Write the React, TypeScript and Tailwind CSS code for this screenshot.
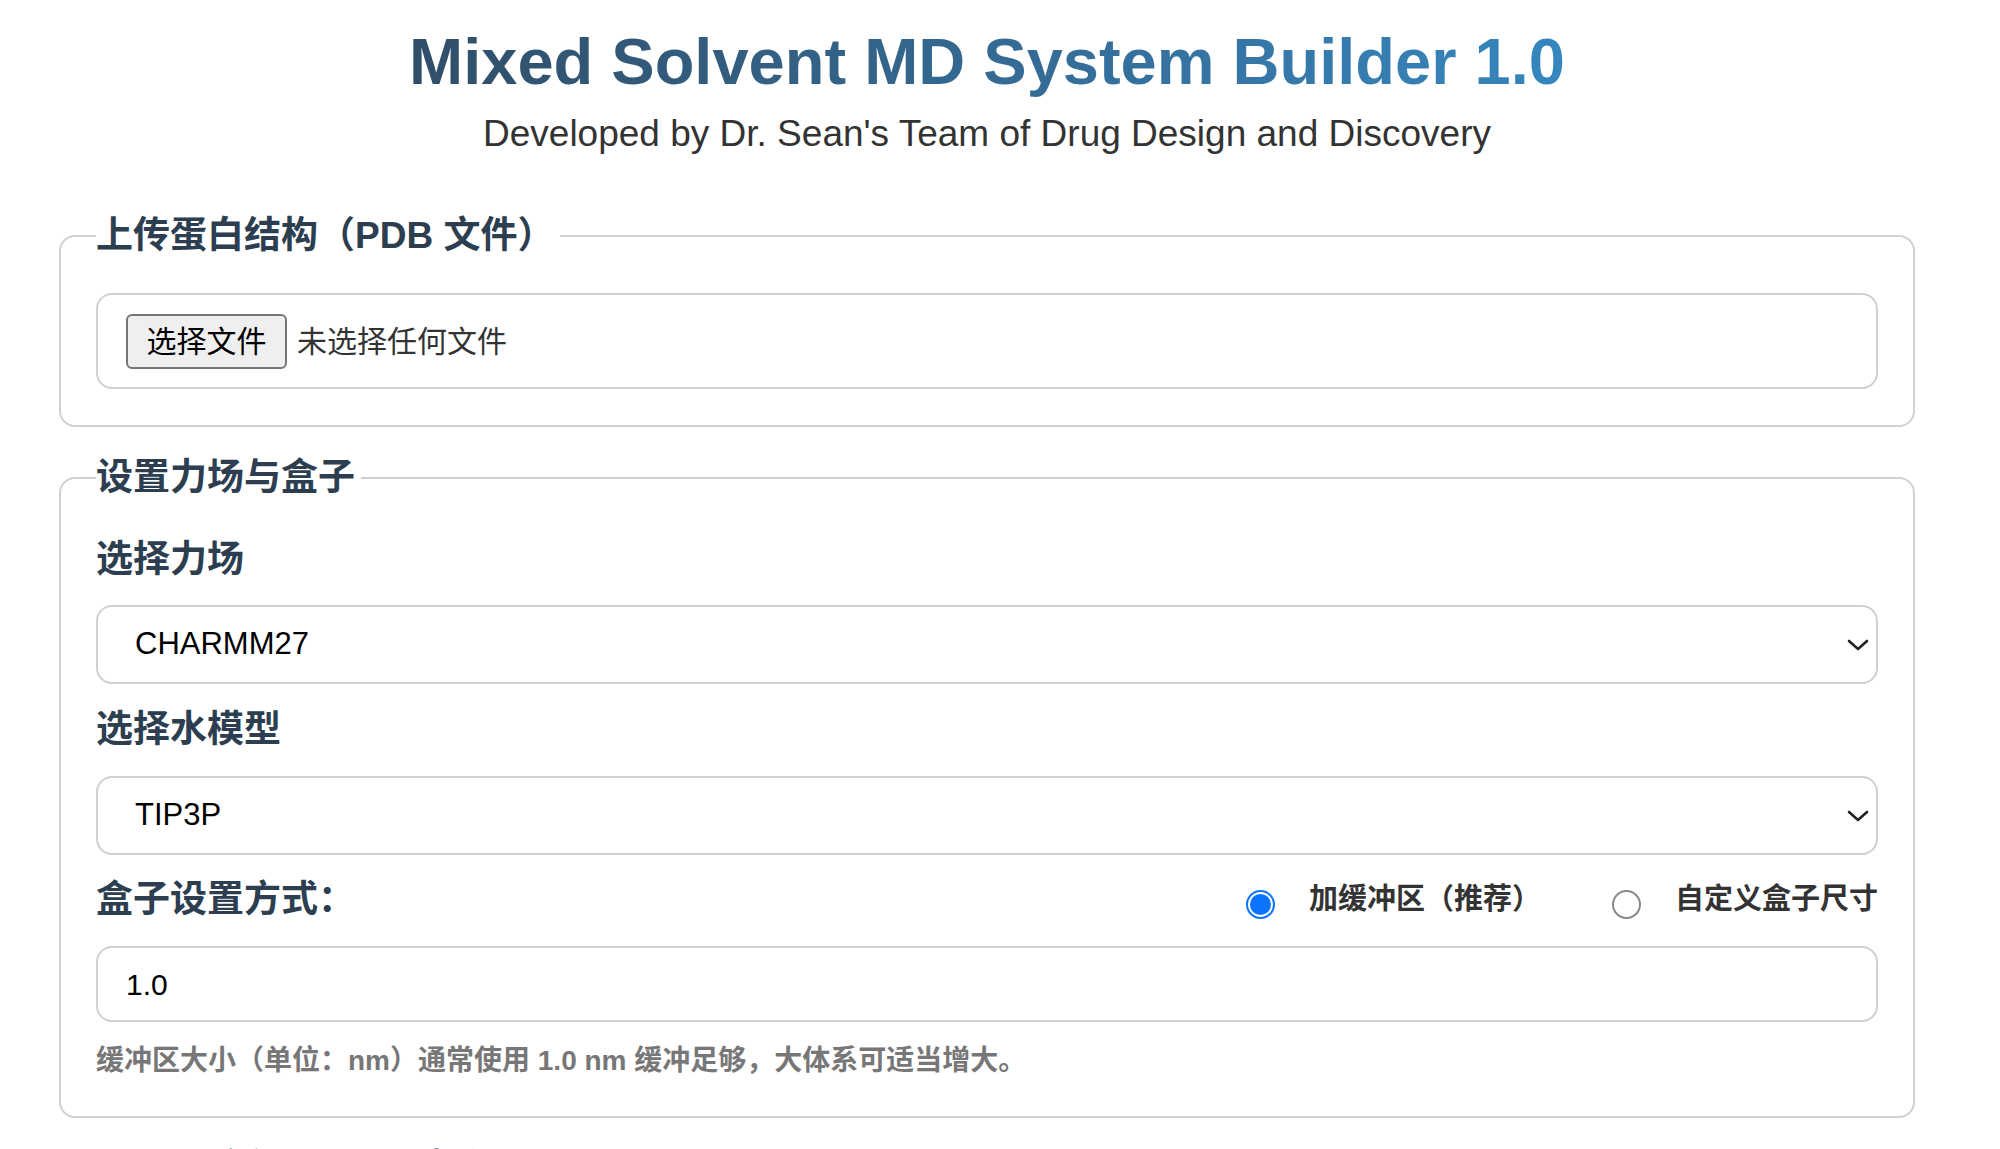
import React from 'react';

const Chevron: React.FC = () => (
  <svg width="22" height="14" viewBox="0 0 22 14" fill="none" className="shrink-0">
    <polyline points="2,3 11,11 20,3" stroke="#222" strokeWidth="2.6" strokeLinecap="round" strokeLinejoin="round" />
  </svg>
);

const FakeSelect: React.FC<{ value: string }> = ({ value }) => (
  <div className="flex h-[79px] items-center justify-between rounded-[16px] border-2 border-[#d0d0d0] bg-white pl-[37px] pr-[7px]">
    <span className="text-[31px] text-black">{value}</span>
    <Chevron />
  </div>
);

const Radio: React.FC<{ checked?: boolean; label: string }> = ({ checked, label }) => (
  <label className="flex items-center gap-[34px]">
    {checked ? (
      <span className="mt-[8px] flex h-[29px] w-[29px] items-center justify-center rounded-full border-2 border-[#0a74ff] bg-white">
        <span className="h-[21px] w-[21px] rounded-full bg-[#0a74ff]" />
      </span>
    ) : (
      <span className="mt-[8px] h-[29px] w-[29px] rounded-full border-2 border-[#8a8a8a] bg-white" />
    )}
    <span className="text-[29px] font-bold text-[#333]">{label}</span>
  </label>
);

export default function App() {
  return (
    <div className="min-h-screen bg-white pl-[59px] pr-[85px] pt-[24px] font-['Liberation_Sans','Noto_Sans_CJK_SC',sans-serif]">
      <h1 className="bg-linear-to-r from-[#2c3e50] to-[#3498db] bg-clip-text text-center text-[65px] font-bold leading-[76px] text-transparent">
        Mixed Solvent MD System Builder 1.0
      </h1>
      <p className="mt-[12px] text-center text-[37px] leading-[44px] text-[#333]">
        Developed by Dr. Sean's Team of Drug Design and Discovery
      </p>

      {/* upload */}
      <fieldset className="mt-[55px] rounded-[16px] border-2 border-[#d0d0d0] px-[35px] pt-[32px] pb-[36px]">
        <legend className="pr-[6px] text-[37px] font-bold leading-[50px] text-[#2c3e50]">上传蛋白结构（PDB 文件）</legend>
        <div className="flex h-[96px] items-center gap-[10px] rounded-[16px] border-2 border-[#d0d0d0] pl-[28px]">
          <button className="h-[55px] w-[161px] rounded-[6px] border-2 border-[#767676] bg-[#efefef] text-[30px] text-black">
            选择文件
          </button>
          <span className="text-[30px] text-[#333]">未选择任何文件</span>
        </div>
      </fieldset>

      {/* force field and box */}
      <fieldset className="mt-[26px] rounded-[16px] border-2 border-[#d0d0d0] px-[35px] pt-[32px] pb-[35px]">
        <legend className="pr-[6px] text-[37px] font-bold leading-[50px] text-[#2c3e50]">设置力场与盒子</legend>
        <div className="text-[37px] font-bold leading-[50px] text-[#2c3e50]">选择力场</div>
        <div className="mt-[20px]">
          <FakeSelect value="CHARMM27" />
        </div>
        <div className="mt-[21px] text-[37px] font-bold leading-[50px] text-[#2c3e50]">选择水模型</div>
        <div className="mt-[21px]">
          <FakeSelect value="TIP3P" />
        </div>
        <div className="mt-[20px] flex h-[50px] items-center justify-between">
          <span className="text-[37px] font-bold leading-[50px] text-[#2c3e50]">盒子设置方式：</span>
          <div className="flex items-center gap-[71px]">
            <Radio checked label="加缓冲区（推荐）" />
            <Radio label="自定义盒子尺寸" />
          </div>
        </div>
        <div className="mt-[21px] flex h-[76px] items-center rounded-[16px] border-2 border-[#d0d0d0] pl-[28px]">
          <span className="text-[30px] text-black">1.0</span>
        </div>
        <p className="mt-[19px] text-[28px] font-bold leading-[40px] text-[#777]">
          缓冲区大小（单位：nm）通常使用 1.0 nm 缓冲足够，大体系可适当增大。
        </p>
      </fieldset>

      {/* solvent (cut off) */}
      <fieldset className="mt-[26px] rounded-[16px] border-2 border-[#d0d0d0] px-[35px] pt-[32px] pb-[33px]">
        <legend className="pr-[6px] text-[37px] font-bold leading-[50px] text-[#2c3e50]">添加共溶剂（小分子探针）</legend>
        <div className="h-[300px]" />
      </fieldset>
    </div>
  );
}
